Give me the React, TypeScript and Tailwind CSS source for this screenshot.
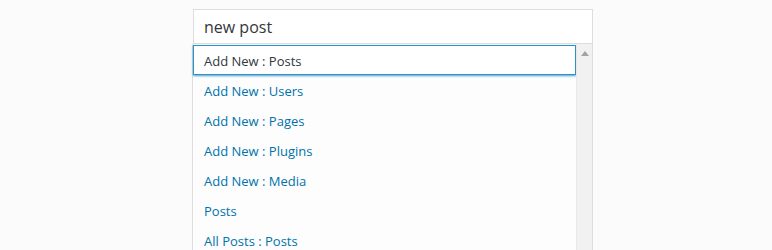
const items = [
  "Add New : Posts",
  "Add New : Users",
  "Add New : Pages",
  "Add New : Plugins",
  "Add New : Media",
  "Posts",
  "All Posts : Posts",
];

export default function App() {
  return (
    <div className="h-[250px] w-[772px] overflow-hidden bg-[#fbfbfb] font-['Open_Sans',sans-serif]">
      <div className="ml-[193px] w-[400px] pt-[9px]">
        <div className="flex h-[35px] items-center border border-[#dddddd] bg-white px-[10px] text-[16px] text-[#32373c]">
          new post
        </div>
        <div className="-ml-px flex h-[220px] border-l border-r border-[#dddddd] bg-[#fdfdfd]">
          <ul className="flex-1 pt-px">
            {items.map((label, i) => (
              <li
                key={label}
                className={
                  i === 0
                    ? "flex h-[30px] items-center border border-[#2e92c6] bg-white pl-[10px] pt-[3px] text-[13px] text-[#32373c] shadow-[0_1px_2px_rgba(30,140,190,0.8)]"
                    : "flex h-[30px] items-center pl-[11px] pt-[3px] text-[13px] text-[#0073aa]"
                }
              >
                {label}
              </li>
            ))}
          </ul>
          <div className="relative w-[16px] border-l border-[#e8e8e8] bg-[#f1f1f1]">
            <span className="absolute left-[4px] top-[7px] h-0 w-0 border-x-[4px] border-b-[5px] border-x-transparent border-b-[#a3a3a3]" />
          </div>
        </div>
      </div>
    </div>
  );
}
